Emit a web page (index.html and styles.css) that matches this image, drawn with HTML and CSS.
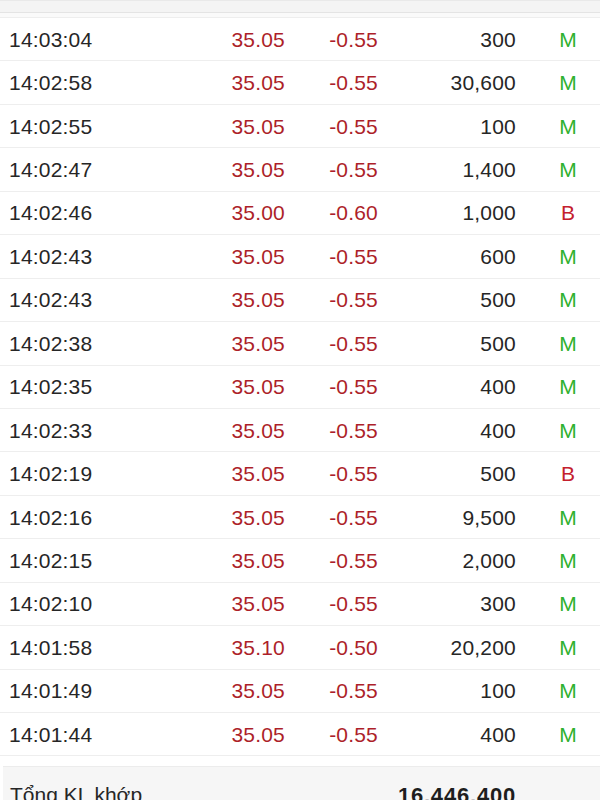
FILE: index.html
```html
<!DOCTYPE html>
<html lang="vi">
<head>
<meta charset="utf-8">
<link rel="stylesheet" href="styles.css">
</head>
<body>
<div class="top-band"></div>
<div class="spacer"></div>
<div class="list">
  <div class="row"><span class="time">14:03:04</span><span class="price">35.05</span><span class="chg">-0.55</span><span class="vol">300</span><span class="gap"></span><span class="side m">M</span></div>
  <div class="row"><span class="time">14:02:58</span><span class="price">35.05</span><span class="chg">-0.55</span><span class="vol">30,600</span><span class="gap"></span><span class="side m">M</span></div>
  <div class="row"><span class="time">14:02:55</span><span class="price">35.05</span><span class="chg">-0.55</span><span class="vol">100</span><span class="gap"></span><span class="side m">M</span></div>
  <div class="row"><span class="time">14:02:47</span><span class="price">35.05</span><span class="chg">-0.55</span><span class="vol">1,400</span><span class="gap"></span><span class="side m">M</span></div>
  <div class="row"><span class="time">14:02:46</span><span class="price">35.00</span><span class="chg">-0.60</span><span class="vol">1,000</span><span class="gap"></span><span class="side b">B</span></div>
  <div class="row"><span class="time">14:02:43</span><span class="price">35.05</span><span class="chg">-0.55</span><span class="vol">600</span><span class="gap"></span><span class="side m">M</span></div>
  <div class="row"><span class="time">14:02:43</span><span class="price">35.05</span><span class="chg">-0.55</span><span class="vol">500</span><span class="gap"></span><span class="side m">M</span></div>
  <div class="row"><span class="time">14:02:38</span><span class="price">35.05</span><span class="chg">-0.55</span><span class="vol">500</span><span class="gap"></span><span class="side m">M</span></div>
  <div class="row"><span class="time">14:02:35</span><span class="price">35.05</span><span class="chg">-0.55</span><span class="vol">400</span><span class="gap"></span><span class="side m">M</span></div>
  <div class="row"><span class="time">14:02:33</span><span class="price">35.05</span><span class="chg">-0.55</span><span class="vol">400</span><span class="gap"></span><span class="side m">M</span></div>
  <div class="row"><span class="time">14:02:19</span><span class="price">35.05</span><span class="chg">-0.55</span><span class="vol">500</span><span class="gap"></span><span class="side b">B</span></div>
  <div class="row"><span class="time">14:02:16</span><span class="price">35.05</span><span class="chg">-0.55</span><span class="vol">9,500</span><span class="gap"></span><span class="side m">M</span></div>
  <div class="row"><span class="time">14:02:15</span><span class="price">35.05</span><span class="chg">-0.55</span><span class="vol">2,000</span><span class="gap"></span><span class="side m">M</span></div>
  <div class="row"><span class="time">14:02:10</span><span class="price">35.05</span><span class="chg">-0.55</span><span class="vol">300</span><span class="gap"></span><span class="side m">M</span></div>
  <div class="row"><span class="time">14:01:58</span><span class="price">35.10</span><span class="chg">-0.50</span><span class="vol">20,200</span><span class="gap"></span><span class="side m">M</span></div>
  <div class="row"><span class="time">14:01:49</span><span class="price">35.05</span><span class="chg">-0.55</span><span class="vol">100</span><span class="gap"></span><span class="side m">M</span></div>
  <div class="row"><span class="time">14:01:44</span><span class="price">35.05</span><span class="chg">-0.55</span><span class="vol">400</span><span class="gap"></span><span class="side m">M</span></div>
</div>
<div class="footer">
  <span class="total-label">Tổng KL khớp</span>
  <span class="total-value">16,446,400</span>
</div>
</body>
</html>
```
FILE: styles.css
```css
html, body {
  margin: 0;
  padding: 0;
  background: #ffffff;
  font-family: "Liberation Sans", Arial, sans-serif;
  width: 600px;
  height: 800px;
  overflow: hidden;
}
.top-band {
  background: #f4f4f4;
  border-top: 1px solid #e9e9e9;
  border-bottom: 1px solid #e4e4e4;
  box-sizing: border-box;
  height: 13px;
}
.spacer {
  height: 4px;
  background: #fafafa;
}
.list {
  border-bottom: 1px solid #eeeeee;
}
.row {
  display: grid;
  grid-template-columns: 200px 85px 93px 138px 20px 64px;
  align-items: center;
  height: 43.44px;
  box-sizing: border-box;
  border-top: 1px solid #eeeeee;
  font-size: 21px;
  letter-spacing: 0.2px;
  line-height: 1;
}
.time {
  padding-left: 9px;
  color: #262626;
}
.price, .chg {
  text-align: right;
  color: #ad1f2a;
}
.vol {
  text-align: right;
  color: #262626;
}
.side {
  text-align: center;
}
.side.m { color: #2fb12f; }
.side.b { color: #c4202e; }
.footer {
  margin-top: 10px;
  margin-left: 3px;
  height: 40px;
  background: #f6f6f6;
  border-top: 1px solid #ececec;
  display: grid;
  grid-template-columns: 200px 313px;
  align-items: start;
  padding-top: 16px;
  box-sizing: border-box;
  font-size: 21px;
  color: #262626;
}
.total-label {
  padding-left: 7px;
}
.total-value {
  text-align: right;
  font-weight: bold;
  font-size: 22px;
  letter-spacing: 0.8px;
  color: #1e1e1e;
}
```
